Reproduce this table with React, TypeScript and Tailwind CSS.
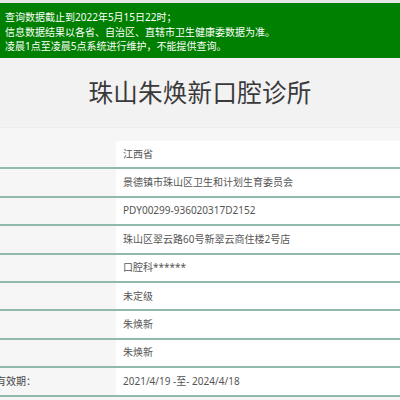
const rows: { label: string; value: string }[] = [
  { label: "", value: "江西省" },
  { label: "", value: "景德镇市珠山区卫生和计划生育委员会" },
  { label: "", value: "PDY00299-936020317D2152" },
  { label: "", value: "珠山区翠云路60号新翠云商住楼2号店" },
  { label: "", value: "口腔科******" },
  { label: "", value: "未定级" },
  { label: "", value: "朱焕新" },
  { label: "", value: "朱焕新" },
  { label: "有效期：", value: "2021/4/19 -至- 2024/4/18" },
];

export default function App() {
  return (
    <div
      className="w-[400px] h-[400px] overflow-hidden bg-[#f5f5f5]"
      style={{ fontFamily: '"Noto Sans", "Noto Sans CJK SC", sans-serif' }}
    >
      <div className="h-[3px] bg-[#e6e6e6]" />
      <div className="bg-[#008000] text-white text-[10px] leading-[14.5px] px-[5px] pt-[7px] h-[55px]">
        <p>查询数据截止到2022年5月15日22时；</p>
        <p>信息数据结果以各省、自治区、直辖市卫生健康委数据为准。</p>
        <p>凌晨1点至凌晨5点系统进行维护，不能提供查询。</p>
      </div>
      <div className="h-[70px] bg-[#f2f2f2] flex items-center justify-center border-b border-[#ececec]">
        <h1 className="text-[24.5px] text-[#3a3a3a] tracking-[0.3px] pt-[2px]">珠山朱焕新口腔诊所</h1>
      </div>
      <div className="h-[13px] bg-[#f6f6f6]" />
      <div>
        {rows.map((r, i) => (
          <div key={i} className="flex h-[28.4px] border-b-2 border-[#93b9aa]">
            <div className="w-[116px] bg-[#f6f6f6] flex items-center overflow-hidden text-[10px] text-[#444] -indent-[4px]">
              {r.label}
            </div>
            <div className="flex-1 bg-white flex items-center pl-[7px] text-[10px] text-[#555]">
              {r.value}
            </div>
          </div>
        ))}
      </div>
    </div>
  );
}
